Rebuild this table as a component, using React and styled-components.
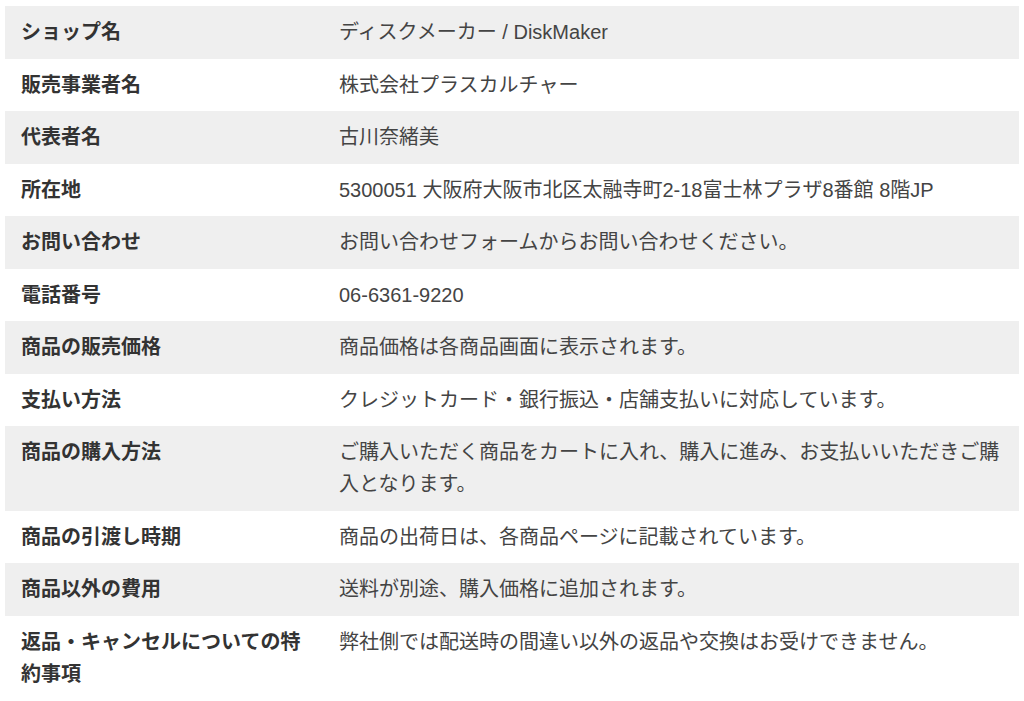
import React from 'react';
import styled, { createGlobalStyle } from 'styled-components';

const GlobalStyle = createGlobalStyle`
  body {
    margin: 0;
    background-color: #fff;
    font-family: "Liberation Sans", "Noto Sans CJK JP", sans-serif;
  }
`;

const Container = styled.div`
  padding: 6px 5px 0;
`;

const Table = styled.table`
  width: 100%;
  border-collapse: collapse;
  table-layout: fixed;
  font-size: 20px;
  line-height: 32px;
`;

const Row = styled.tr`
  background-color: ${(props) => (props.$shaded ? '#efefef' : '#fff')};
`;

const Label = styled.th`
  box-sizing: border-box;
  width: 318px;
  padding: 10.25px 16px;
  text-align: left;
  vertical-align: top;
  font-weight: bold;
  color: #333;
`;

const Value = styled.td`
  padding: 10.25px 16px;
  vertical-align: top;
  color: #444;
`;

const rows = [
  ['ショップ名', 'ディスクメーカー / DiskMaker'],
  ['販売事業者名', '株式会社プラスカルチャー'],
  ['代表者名', '古川奈緒美'],
  ['所在地', '5300051 大阪府大阪市北区太融寺町2-18富士林プラザ8番館 8階JP'],
  ['お問い合わせ', 'お問い合わせフォームからお問い合わせください。'],
  ['電話番号', '06-6361-9220'],
  ['商品の販売価格', '商品価格は各商品画面に表示されます。'],
  ['支払い方法', 'クレジットカード・銀行振込・店舗支払いに対応しています。'],
  ['商品の購入方法', 'ご購入いただく商品をカートに入れ、購入に進み、お支払いいただきご購入となります。'],
  ['商品の引渡し時期', '商品の出荷日は、各商品ページに記載されています。'],
  ['商品以外の費用', '送料が別途、購入価格に追加されます。'],
  ['返品・キャンセルについての特約事項', '弊社側では配送時の間違い以外の返品や交換はお受けできません。'],
];

function App() {
  return (
    <Container>
      <GlobalStyle />
      <Table>
        <tbody>
          {rows.map(([label, value], i) => (
            <Row key={label} $shaded={i % 2 === 0}>
              <Label>{label}</Label>
              <Value>{value}</Value>
            </Row>
          ))}
        </tbody>
      </Table>
    </Container>
  );
}

export default App;
